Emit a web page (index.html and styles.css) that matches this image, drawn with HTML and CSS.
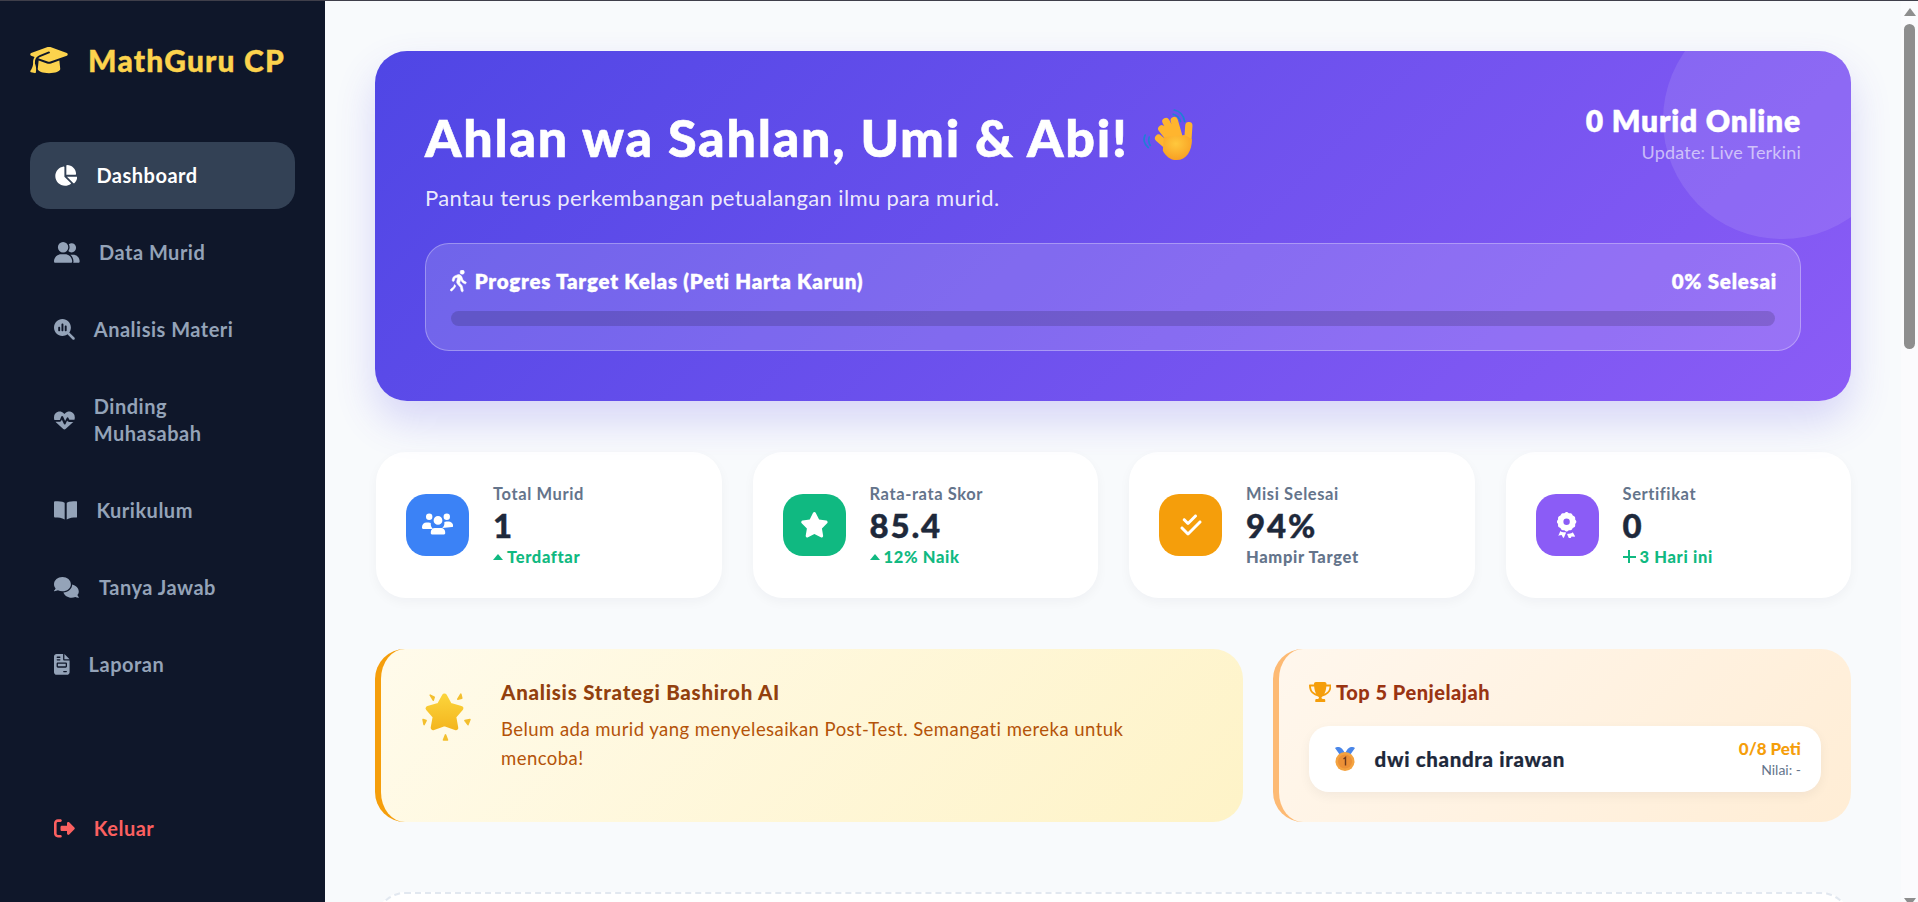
FILE: index.html
```html
<!DOCTYPE html>
<html lang="id">
<head>
    <meta charset="UTF-8">
    <meta name="viewport" content="width=device-width, initial-scale=1.0">
    <title>MathGuru CP</title>
    <link rel="stylesheet" href="styles.css">
</head>
<body>
    <div class="app">
        <aside class="sidebar">
            <div class="logo">
                <svg class="logo-icon" viewBox="0 0 640 512"><path d="M320 32c-8.100 0-16.100 1.400-23.700 4.100L15.800 137.400C6.300 140.900 0 149.900 0 160s6.300 19.100 15.800 22.600l57.900 20.900C57.300 229.300 48 259.800 48 291.900v28.100c0 28.400-10.800 57.700-22.300 80.800-6.500 13-13.900 25.800-22.500 37.600C0 442.700-.9 448.300.9 453.400s6 8.900 11.200 10.200l64 16c4.200 1.100 8.700.3 12.400-2s6.300-6.100 7.100-10.400c8.600-42.800 4.300-81.200-2.100-108.700C90.300 344.300 86 329.800 80 316.500V291.900c0-30.200 10.200-58.700 27.900-81.500 12.900-15.500 29.600-28 49.200-35.700l157-61.700c8.200-3.200 17.500.8 20.700 9s-.8 17.500-9 20.700l-157 61.700c-12.400 4.900-23.300 12.400-32.200 21.600l159.600 57.600c7.600 2.700 15.600 4.100 23.700 4.100s16.100-1.400 23.700-4.100L624.200 182.600c9.500-3.400 15.800-12.500 15.800-22.600s-6.300-19.100-15.800-22.600L343.700 36.100C336.100 33.400 328.100 32 320 32zM128 408c0 35.300 86 72 192 72s192-36.700 192-72L496.700 262.600 354.500 314c-11.100 4-22.800 6-34.500 6s-23.500-2-34.500-6L143.300 262.600 128 408z"/></svg>
                <span>MathGuru CP</span>
            </div>
            <nav class="nav">
                <a class="nav-item active">
                    <svg class="icon" viewBox="0 0 576 512"><path d="M304 240V16.600c0-9 7-16.600 16-16.600C443.700 0 544 100.300 544 224c0 9-7.600 16-16.600 16H304zM32 272C32 150.700 122.100 50.300 239 34.300c9.200-1.300 17 6.100 17 15.400V288L412.500 444.500c6.700 6.700 6.200 17.700-1.500 23.100C371.800 495.600 323.800 512 272 512 139.500 512 32 404.600 32 272zm526.400 16c9.300 0 16.600 7.800 15.400 17-7.700 55.900-34.600 105.600-73.900 142.300-6 5.600-15.400 5.200-21.200-.7L320 288h238.400z"/></svg>
                    <span>Dashboard</span>
                </a>
                <a class="nav-item">
                    <svg class="icon" viewBox="0 0 640 512"><path d="M224 256a128 128 0 1 0 0-256 128 128 0 1 0 0 256zm-45 48C79 304 0 383 0 481c0 17 14 31 30 31h388c17 0 30-14 30-31 0-98-79-177-177-177zM609 512H471c5-9 9-20 9-31 0-67-30-127-77-167 3 0 5 0 8 0h61c89 0 160 72 160 160 0 21-7 38-23 38zM432 256c-31 0-59-13-79-33 19-26 31-59 31-95 0-27-7-52-18-74 20-14 42-22 66-22 62 0 112 50 112 112s-50 112-112 112z"/></svg>
                    <span>Data Murid</span>
                </a>
                <a class="nav-item">
                    <svg class="icon" viewBox="0 0 512 512"><path d="M416 208c0 46-15 88-40 123l127 126c12 13 12 33 0 46s-33 12-46 0L331 376c-35 25-77 40-123 40C93 416 0 323 0 208S93 0 208 0s208 93 208 208zM104 280c0 13 11 24 24 24s24-11 24-24v-64c0-13-11-24-24-24s-24 11-24 24zm80-144v144c0 13 11 24 24 24s24-11 24-24V136c0-13-11-24-24-24s-24 11-24 24zm80 48v96c0 13 11 24 24 24s24-11 24-24v-96c0-13-11-24-24-24s-24 11-24 24z"/></svg>
                    <span>Analisis Materi</span>
                </a>
                <a class="nav-item">
                    <svg class="icon" viewBox="0 0 512 512"><path d="M228 470 47 301c-3-3-6-6-9-9h92c23 0 43-14 52-35l10-25 49 109c4 8 12 14 21 14s18-5 22-13l40-81 2 3c9 18 27 29 47 29h103c-3 3-6 6-9 9L284 470c-7 7-18 10-28 10s-21-3-28-10zM503 240H382c-2 0-3-1-4-2l-22-44c-4-8-12-13-21-13s-18 5-22 13l-40 79-50-112c-4-9-13-14-22-14s-18 6-22 15l-32 80c-1 3-3 5-6 5H9C3 224 0 204 0 183v-6C0 109 49 51 116 40c44-7 89 7 121 39l19 18 19-18c32-32 77-46 121-39 67 11 116 69 116 137v6c0 20-3 40-9 57z"/></svg>
                    <span>Dinding<br>Muhasabah</span>
                </a>
                <a class="nav-item">
                    <svg class="icon" viewBox="0 0 576 512"><path d="M250 64C200 33 120 32 30 32 14 32 0 46 0 62v339c0 17 14 31 30 31 80 1 160 5 233 48V80c0-6-5-12-13-16zM546 32c-90 0-170 1-220 32-8 4-13 10-13 16v400c73-43 153-47 233-48 16 0 30-14 30-31V62c0-16-14-30-30-30z"/></svg>
                    <span>Kurikulum</span>
                </a>
                <a class="nav-item">
                    <svg class="icon" viewBox="0 0 640 512"><path d="M208 352c115 0 208-79 208-176S323 0 208 0 0 79 0 176c0 39 15 74 40 103-4 9-9 18-15 26-10 14-20 25-22 27-3 3-4 8-2 12s6 6 10 6c30 0 60-9 86-21 33 15 71 23 111 23zm240-176c0 112-99 197-216 207 24 74 104 129 200 129 33 0 65-7 93-19 22 10 48 19 75 19 5 0 9-3 11-7s1-9-2-12c-2-2-10-12-19-25-6-8-10-15-14-23 22-26 34-57 34-91 0-84-72-153-164-172 1 4 2 9 2 14z"/></svg>
                    <span>Tanya Jawab</span>
                </a>
                <a class="nav-item">
                    <svg class="icon" viewBox="0 0 384 512"><path d="M64 0C29 0 0 29 0 64v384c0 35 29 64 64 64h256c35 0 64-29 64-64V160H256c-18 0-32-14-32-32V0zm192 0v128h128zM80 64h64c9 0 16 7 16 16s-7 16-16 16H80c-9 0-16-7-16-16s7-16 16-16zm0 64h64c9 0 16 7 16 16s-7 16-16 16H80c-9 0-16-7-16-16s7-16 16-16zm-16 112c0-18 14-32 32-32h192c18 0 32 14 32 32v64c0 18-14 32-32 32H96c-18 0-32-14-32-32zm32 0v64h192v-64zm144 176h64c9 0 16 7 16 16s-7 16-16 16h-64c-9 0-16-7-16-16s7-16 16-16z" fill-rule="evenodd"/></svg>
                    <span>Laporan</span>
                </a>
            </nav>
            <a class="nav-item logout">
                <svg class="icon" viewBox="0 0 512 512"><path d="M502 279c13-12 13-33 0-46L374 105c-9-9-23-12-35-7s-19 17-19 30v64H192c-18 0-32 14-32 32v64c0 18 14 32 32 32h128v64c0 13 8 25 20 30s26 2 35-7zM160 96c18 0 32-14 32-32s-14-32-32-32H96C43 32 0 75 0 128v256c0 53 43 96 96 96h64c18 0 32-14 32-32s-14-32-32-32H96c-18 0-32-14-32-32V128c0-18 14-32 32-32z"/></svg>
                <span>Keluar</span>
            </a>
        </aside>

        <main class="main">
            <section class="hero">
                <div class="hero-circle"></div>
                <div class="hero-top">
                    <div>
                        <h1 class="hero-title">
                            Ahlan wa Sahlan, Umi &amp; Abi!
                            <svg class="wave" viewBox="18 8 48 49">
                                <defs>
                                    <radialGradient id="palm" cx="0.45" cy="0.35" r="0.75">
                                        <stop offset="0" stop-color="#ffc83d"/>
                                        <stop offset="1" stop-color="#f79a1f"/>
                                    </radialGradient>
                                </defs>
                                <path d="M48 9c5 1 9 5 10 11M47 13c3 1 6 3 7 7M20 33c-2 4-1 9 3 12M24 35c-1 3-1 5 1 8" fill="none" stroke="#1f7fd6" stroke-width="1.600" stroke-linecap="round"/>
                                <g stroke="#ffb52e" stroke-width="7" stroke-linecap="round">
                                    <path d="M33 36l8 7M36 27l8 10M40 20l7 13M48 19l4 14M62 24l-1 15"/>
                                </g>
                                <path d="M38 35l20-2 7 4c0 11-5 20-15 20-6 0-10-4-13-9z" fill="url(#palm)"/>
                            </svg>
                        </h1>
                        <p class="hero-sub">Pantau terus perkembangan petualangan ilmu para murid.</p>
                    </div>
                    <div class="hero-online">
                        <div class="online-count">0 Murid Online</div>
                        <div class="online-note">Update: Live Terkini</div>
                    </div>
                </div>
                <div class="progress-box">
                    <div class="progress-head">
                        <span class="progress-title">
                            <svg class="run" viewBox="0 0 417 512"><path d="M320 48a48 48 0 1 1-96 0 48 48 0 1 1 96 0zM125 175c-10 4-18 13-20 24l-9 37c-3 13-16 21-29 18s-21-16-18-29l9-38c6-25 23-46 47-55l56-23c20-9 43-9 63 1 20 9 36 26 42 47l17 48c8 22 23 39 44 48l22 10c12 6 17 20 11 32s-20 17-32 11l-22-11c-28-14-50-38-61-68l-6-17-24 79 48 52c6 7 11 15 13 24l20 92c3 13-6 26-18 29s-26-6-29-18l-19-85-64-70c-15-16-21-39-16-60l22-87zM82 369l18-46 17 19 11 12-8 21c-5 12-12 23-22 31L47 464c-10 9-25 8-34-2s-8-25 2-34l60-48c3-3 5-7 7-11z"/></svg>
                            Progres Target Kelas (Peti Harta Karun)
                        </span>
                        <span class="progress-title">0% Selesai</span>
                    </div>
                    <div class="progress-bar"></div>
                </div>
            </section>

            <section class="stats">
                <div class="stat-card">
                    <div class="stat-icon blue">
                        <svg viewBox="0 0 640 512"><path d="M144 160a64 64 0 1 0 0-128 64 64 0 1 0 0 128zm352 0a64 64 0 1 0 0-128 64 64 0 1 0 0 128zM320 256a80 80 0 1 0 0-176 80 80 0 1 0 0 176zM0 298c0-49 40-90 90-90h43c16 0 31 4 44 10-2 8-2 16-2 24 0 38 17 72 43 96H21c-12 0-21-9-21-21zm405 21c27-24 43-58 43-96 0-8-1-16-2-24 13-6 28-10 44-10h43c50 0 90 41 90 90 0 12-9 21-21 21zM176 400c0-44 36-80 80-80h128c44 0 80 36 80 80v27c0 12-9 21-21 21H197c-12 0-21-9-21-21z"/></svg>
                    </div>
                    <div class="stat-body">
                        <div class="stat-label">Total Murid</div>
                        <div class="stat-value">1</div>
                        <div class="stat-note green"><span class="up"></span>Terdaftar</div>
                    </div>
                </div>
                <div class="stat-card">
                    <div class="stat-icon teal">
                        <svg viewBox="0 0 576 512"><path d="M316 18c-5-11-16-18-28-18s-23 7-29 18l-64 132-143 21c-12 2-22 10-26 22s-1 25 8 33l104 103-24 145c-2 12 3 24 13 31s23 8 34 2l127-68 128 68c11 6 24 5 34-2s15-19 13-31l-24-145 104-103c9-8 12-21 8-33s-14-20-26-22l-143-21z"/></svg>
                    </div>
                    <div class="stat-body">
                        <div class="stat-label">Rata-rata Skor</div>
                        <div class="stat-value">85.4</div>
                        <div class="stat-note green"><span class="up"></span>12% Naik</div>
                    </div>
                </div>
                <div class="stat-card">
                    <div class="stat-icon amber">
                        <svg class="check-icon" viewBox="0 0 512 512"><path d="M374.600 86.600c12.500-12.500 12.500-32.800 0-45.300s-32.800-12.500-45.300 0L192 178.700l-57.400-57.400c-12.500-12.500-32.800-12.500-45.300 0s-12.500 32.800 0 45.300l80 80c12.500 12.500 32.800 12.500 45.300 0l160-160zm96 128c12.500-12.500 12.500-32.800 0-45.300s-32.800-12.500-45.300 0L192 402.700 86.600 297.400c-12.500-12.500-32.800-12.500-45.300 0s-12.500 32.800 0 45.300l128 128c12.500 12.500 32.800 12.500 45.300 0l256-256z"/></svg>
                    </div>
                    <div class="stat-body">
                        <div class="stat-label">Misi Selesai</div>
                        <div class="stat-value">94%</div>
                        <div class="stat-note slate">Hampir Target</div>
                    </div>
                </div>
                <div class="stat-card">
                    <div class="stat-icon violet">
                        <svg viewBox="0 0 384 512"><path d="M173 5c11-7 27-7 38 0l27 18 32 0c13 0 25 8 31 20l15 28 28 15c12 6 19 18 20 31v32l18 27c7 11 7 27 0 38l-18 27v32c0 13-8 25-20 31l-28 15-15 28c-6 12-18 20-31 20h-32l-27 18c-11 7-27 7-38 0l-27-18h-32c-13 0-25-8-31-20l-15-28-28-15C29 298 21 286 21 273v-32L3 214c-7-11-7-27 0-38l18-27v-32c0-13 8-25 20-31l28-15 15-28c6-12 18-20 31-20h32zM256 195a64 64 0 1 0-128 0 64 64 0 1 0 128 0zM25 480l43-102c19 20 47 29 75 29l27 0 11 8-41 94c-2 4-6 7-10 7s-9-2-11-6l-26-48-54 6c-4 1-9-1-11-5s-3-8-3-12zm334 0c2 4 1 8-2 12s-8 6-12 5l-54-6-26 48c-2 4-7 6-11 6s-8-3-10-7l-41-94 11-8 27 0c28 0 56-9 75-29z"/></svg>
                    </div>
                    <div class="stat-body">
                        <div class="stat-label">Sertifikat</div>
                        <div class="stat-value">0</div>
                        <div class="stat-note green"><span class="plus"></span>3 Hari ini</div>
                    </div>
                </div>
            </section>

            <section class="insights">
                <div class="insight-card">
                    <svg class="star" viewBox="11 12 49 48">
                        <defs>
                            <linearGradient id="starFill" x1="0" y1="0" x2="0" y2="1">
                                <stop offset="0" stop-color="#fbd33a"/>
                                <stop offset="1" stop-color="#f4b720"/>
                            </linearGradient>
                        </defs>
                        <path d="M34 16l5 9 11 3-7 8 2 11-11-4-11 4 2-11-7-8 11-3z" fill="url(#starFill)" stroke="url(#starFill)" stroke-width="5" stroke-linejoin="round"/>
                        <g fill="#f3bf2e" stroke="#f3bf2e" stroke-width="1.500" stroke-linejoin="round">
                            <path d="M20 15l4 2-1 3zM50 14l1 4-4 1zM13 39l3 1-2 4zM59 39l-2 5-3-4zM35 54l2 5h-4z"/>
                        </g>
                    </svg>
                    <div>
                        <h3 class="insight-title">Analisis Strategi Bashiroh AI</h3>
                        <p class="insight-text">Belum ada murid yang menyelesaikan Post-Test. Semangati mereka untuk mencoba!</p>
                    </div>
                </div>
                <div class="top-card">
                    <h3 class="top-title">
                        <svg class="trophy" viewBox="0 0 576 512"><path d="M400 0H176c-27 0-48 22-47 48v16H24C11 64 0 75 0 88c0 93 34 157 79 200 45 42 99 63 139 74 24 6 38 24 38 40 0 17-14 30-30 30h-34c-18 0-32 14-32 32v32c0 9 7 16 16 16h224c9 0 16-7 16-16v-32c0-18-14-32-32-32h-34c-16 0-30-13-30-30 0-16 14-34 38-40 40-11 94-32 139-74 45-43 79-107 79-200 0-13-11-24-24-24H447V48c1-26-20-48-47-48zM49 112h83c9 90 29 150 52 190-25-11-52-26-72-46-32-30-57-74-63-144zm415 144c-20 20-47 35-72 46 23-40 43-100 52-190h83c-6 70-31 114-63 144z"/></svg>
                        Top 5 Penjelajah
                    </h3>
                    <div class="rank-row">
                        <svg class="medal" viewBox="35 73 20 24">
                            <path d="M35 74c3-2 6-1 8 2l2 3 2-3c2-3 5-4 8-2l-5 7h-10z" fill="#4a86e8"/>
                            <circle cx="45" cy="87.500" r="9.500" fill="#f4a340"/>
                            <circle cx="45" cy="87.500" r="7" fill="#ec9036"/>
                            <path d="M43.500 85l2-1.500v8" fill="none" stroke="#6e3a1c" stroke-width="1.400"/>
                        </svg>
                        <span class="rank-name">dwi chandra irawan</span>
                        <div class="rank-score">
                            <div class="rank-chest">0/8 Peti</div>
                            <div class="rank-grade">Nilai: -</div>
                        </div>
                    </div>
                </div>
            </section>

            <section class="dashed-card"></section>
        </main>

        <div class="scrollbar">
            <span class="arrow-up"></span>
            <span class="thumb"></span>
            <span class="arrow-down"></span>
        </div>
    </div>
</body>
</html>
```

FILE: styles.css
```css
* {
    margin: 0;
    padding: 0;
    box-sizing: border-box;
}

html, body {
    height: 100%;
    overflow: hidden;
    background-color: #f8fafc;
}

body {
    font-family: "Lato", "Noto Sans", sans-serif;
    border-top: 1px solid #3f3f4a;
}

.app {
    display: flex;
    height: 901px;
}

/* sidebar */
.sidebar {
    width: 325px;
    flex-shrink: 0;
    background-color: #0f172a;
    padding: 40px 30px;
    display: flex;
    flex-direction: column;
}

.logo {
    display: flex;
    align-items: center;
    gap: 20px;
    height: 37px;
    margin-bottom: 64px;
    color: #fcd34d;
    font-size: 30px;
    letter-spacing: 1.2px;
    font-weight: 900;
    -webkit-text-stroke: 0.4px;
}

.logo-icon {
    width: 38px;
    height: 30px;
    fill: #fcd34d;
}

.nav {
    flex: 1;
}

.nav-item {
    display: flex;
    align-items: center;
    gap: 19px;
    padding: 20px 24px;
    margin-bottom: 10px;
    border-radius: 20px;
    color: #94a3b8;
    font-size: 20px;
    letter-spacing: 0.5px;
    line-height: 27px;
    font-weight: 700;
}

.nav-item .icon {
    height: 20.8px;
    width: auto;
    flex-shrink: 0;
    fill: currentColor;
}

.nav-item.active {
    background-color: #334155;
    color: #fff;
}

.nav-item.logout {
    color: #fb6060;
    margin-bottom: 0;
}

/* main */
.main {
    flex: 1;
    min-width: 0;
    padding: 50px 50px 0;
    overflow: hidden;
}

.hero {
    position: relative;
    overflow: hidden;
    height: 350px;
    padding: 50px;
    border-radius: 32px;
    background: linear-gradient(135deg, #4f46e5, #8b5cf6);
    color: #fff;
    margin-bottom: 51px;
    box-shadow: 0 20px 40px rgba(79, 70, 229, 0.2);
}

.hero-circle {
    position: absolute;
    top: -50px;
    right: -50px;
    width: 238px;
    height: 238px;
    border-radius: 50%;
    background: rgba(255, 255, 255, 0.1);
}

.hero-top {
    position: relative;
    display: flex;
    justify-content: space-between;
    height: 142px;
}

.hero-title {
    display: flex;
    align-items: center;
    gap: 14px;
    font-size: 52px;
    letter-spacing: 1.75px;
    line-height: 72px;
    font-weight: 900;
    margin-bottom: 11px;
    -webkit-text-stroke: 0.6px;
}

.wave {
    width: 50px;
    height: 51px;
    margin-top: -6px;
}

.hero-sub {
    font-size: 22px;
    letter-spacing: 0.37px;
    color: rgba(255, 255, 255, 0.9);
}

.hero-online {
    text-align: right;
}

.online-count {
    font-size: 30px;
    letter-spacing: 0.8px;
    line-height: 38px;
    font-weight: 800;
    -webkit-text-stroke: 0.4px;
}

.online-note {
    font-size: 18px;
    letter-spacing: 0.2px;
    margin-top: 2px;
    color: rgba(255, 255, 255, 0.6);
}

.progress-box {
    position: relative;
    height: 108px;
    padding: 25px;
    border-radius: 24px;
    border: 1px solid rgba(255, 255, 255, 0.3);
    background: rgba(255, 255, 255, 0.15);
}

.progress-head {
    display: flex;
    justify-content: space-between;
    height: 24px;
    margin-bottom: 18px;
}

.progress-title {
    display: flex;
    align-items: center;
    gap: 6px;
    font-size: 20.5px;
    letter-spacing: 0.75px;
    font-weight: 800;
    -webkit-text-stroke: 0.3px;
}

.progress-title:last-child {
    margin-right: -2px;
}

.run {
    height: 23px;
    margin-left: -1px;
    fill: #fff;
    stroke: #fff;
    stroke-width: 12px;
}

.progress-bar {
    height: 15px;
    border-radius: 10px;
    background: rgba(0, 0, 0, 0.15);
}

/* stat cards */
.stats {
    display: grid;
    grid-template-columns: repeat(4, 1fr);
    gap: 31px;
    margin-left: 1px;
    margin-bottom: 51px;
}

.stat-card {
    display: flex;
    align-items: center;
    gap: 24px;
    height: 146px;
    padding: 0 30px;
    background: #fff;
    border-radius: 30px;
    box-shadow: 0 4px 12px rgba(15, 23, 42, 0.04);
}

.stat-icon {
    width: 63px;
    height: 62px;
    flex-shrink: 0;
    border-radius: 20px;
    display: flex;
    align-items: center;
    justify-content: center;
}

.stat-icon svg {
    height: 25.6px;
    fill: #fff;
}

.stat-icon .check-icon {
    height: 24px;
}

.blue { background: #3b82f6; }
.teal { background: #10b981; }
.amber { background: #f59e0b; }
.violet { background: #8b5cf6; }

.stat-label {
    font-size: 16.5px;
    letter-spacing: 0.6px;
    line-height: 22px;
    font-weight: 700;
    color: #64748b;
}

.stat-value {
    font-size: 33px;
    letter-spacing: 1.8px;
    line-height: 42px;
    margin-top: -1px;
    font-weight: 900;
    color: #1e293b;
    -webkit-text-stroke: 0.4px;
}

.stat-note {
    display: flex;
    align-items: center;
    gap: 4px;
    font-size: 16.5px;
    letter-spacing: 0.65px;
    line-height: 22px;
    font-weight: 900;
}

.green { color: #10b981; }
.slate { color: #64748b; }

.up {
    width: 0;
    height: 0;
    border-left: 5px solid transparent;
    border-right: 5px solid transparent;
    border-bottom: 6px solid #10b981;
}

.plus {
    width: 13px;
    height: 13px;
    background:
        linear-gradient(#10b981, #10b981) center / 13px 2px no-repeat,
        linear-gradient(#10b981, #10b981) center / 2px 13px no-repeat;
}

/* insights */
.insights {
    display: grid;
    grid-template-columns: 1.5fr 1fr;
    gap: 30px;
    margin-bottom: 70px;
}

.insight-card {
    display: flex;
    align-items: flex-start;
    gap: 30px;
    height: 173px;
    padding: 30px 40px;
    border-left: 6px solid #f59e0b;
    border-radius: 30px;
    background: linear-gradient(135deg, #fffbeb, #fef3c7);
}

.star {
    width: 50px;
    height: 49px;
    flex-shrink: 0;
    margin-top: 13px;
}

.insight-title {
    font-size: 20.5px;
    letter-spacing: 0.75px;
    line-height: 26px;
    font-weight: 900;
    color: #92400e;
    margin-bottom: 10px;
}

.insight-text {
    font-size: 18.5px;
    letter-spacing: 0.45px;
    line-height: 29px;
    color: #b45309;
}

.top-card {
    height: 173px;
    padding: 30px;
    border-left: 6px solid #fdba74;
    border-radius: 30px;
    background: linear-gradient(135deg, #fff7ed, #ffedd5);
}

.top-title {
    display: flex;
    align-items: center;
    gap: 5px;
    font-size: 20px;
    letter-spacing: 0.5px;
    line-height: 26px;
    font-weight: 900;
    color: #9a3412;
    margin-bottom: 21px;
}

.trophy {
    height: 20px;
    fill: #f59e0b;
}

.rank-row {
    display: flex;
    align-items: center;
    height: 66px;
    padding: 0 20px 0 26px;
    background: #fff;
    border-radius: 20px;
    box-shadow: 0 4px 12px rgba(15, 23, 42, 0.05);
}

.medal {
    width: 20px;
    height: 24px;
    margin-right: 20px;
}

.rank-name {
    flex: 1;
    font-size: 20.5px;
    letter-spacing: 0.65px;
    font-weight: 900;
    color: #1e293b;
    -webkit-text-stroke: 0.2px;
}

.rank-score {
    text-align: right;
}

.rank-chest {
    font-size: 17px;
    line-height: 19px;
    font-weight: 900;
    color: #f59e0b;
    margin-bottom: 3px;
}

.rank-grade {
    font-size: 14px;
    line-height: 18px;
    color: #64748b;
}

.dashed-card {
    height: 400px;
    border: 2px dashed #e2e8f0;
    border-radius: 30px;
    background: #fff;
}

/* hand drawn scrollbar, the shot has one */
.scrollbar {
    width: 17px;
    flex-shrink: 0;
    background: #fbfbfd;
    display: flex;
    flex-direction: column;
    align-items: center;
    padding-top: 7px;
    position: relative;
}

.arrow-up {
    width: 0;
    height: 0;
    border-left: 6px solid transparent;
    border-right: 6px solid transparent;
    border-bottom: 8px solid #8e8e8e;
}

.thumb {
    width: 11px;
    height: 325px;
    margin-top: 8px;
    border-radius: 6px;
    background: #8e8e8e;
}

.arrow-down {
    position: absolute;
    bottom: -4px;
    width: 0;
    height: 0;
    border-left: 6px solid transparent;
    border-right: 6px solid transparent;
    border-top: 8px solid #8e8e8e;
}
```
